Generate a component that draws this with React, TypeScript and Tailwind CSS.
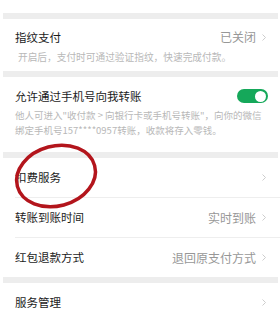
import React from "react";

const font = { fontFamily: '"Noto Sans CJK SC", "Noto Sans", sans-serif' };

const Band = () => <div className="ml-[3px] mr-[2px] h-[6px] bg-[#ededed]" />;

const Chevron = () => (
	<svg width="6" height="9" viewBox="0 0 6 9" className="ml-[5px] shrink-0">
		<path d="M1.5 1.5l3 3-3 3" fill="none" stroke="#cdcdcd" strokeWidth="1" />
	</svg>
);

const Row = ({ title, value, divider = true }: { title: string; value?: string; divider?: boolean }) => (
	<div className="relative">
		<div className="flex h-[39px] items-center pl-[15px] pr-[13px]">
			<span className="flex-1 text-[11.5px] text-[#1c1c1c]">{title}</span>
			{value && <span className="text-[12px] text-[#979797]">{value}</span>}
			<Chevron />
		</div>
		{divider && <div className="ml-[15px] h-px bg-[#eeeeee]" />}
	</div>
);

export default function App() {
	return (
		<div className="relative h-[320px] w-[280px] overflow-hidden bg-white" style={font}>
			<div className="h-[13px]" />
			<Band />

			<div className="h-[52px] pl-[15px] pr-[13px] pt-[10px]">
				<div className="flex items-center leading-[16px]">
					<span className="flex-1 text-[11.5px] text-[#1c1c1c]">指纹支付</span>
					<span className="text-[12px] text-[#979797]">已关闭</span>
					<Chevron />
				</div>
				<div className="mt-[5px] pl-[3px] text-[9.7px] leading-[14px] text-[#b8b8b8]">
					开启后，支付时可通过验证指纹，快速完成付款。
				</div>
			</div>
			<Band />

			<div className="h-[75px] pl-[15px] pr-[12px] pt-[11px]">
				<div className="flex items-center leading-[16px]">
					<span className="flex-1 text-[11.5px] text-[#1c1c1c]">允许通过手机号向我转账</span>
					<div className="flex h-[14px] w-[31px] items-center justify-end rounded-full bg-[#15a85a] pr-[2px]">
						<div className="h-[11px] w-[11px] rounded-full bg-white" />
					</div>
				</div>
				<div className="mt-[4px] whitespace-nowrap text-[9.5px] leading-[15px] text-[#b8b8b8]">
					<div>他人可进入"收付款 &gt; 向银行卡或手机号转账"，向你的微信</div>
					<div>绑定手机号157****0957转账，收款将存入零钱。</div>
				</div>
			</div>
			<Band />

			<Row title="扣费服务" />
			<Row title="转账到账时间" value="实时到账" />
			<Row title="红包退款方式" value="退回原支付方式" divider={false} />
			<Band />
			<Row title="服务管理" />

			<svg
				className="pointer-events-none absolute left-0 top-0"
				width="280"
				height="320"
				viewBox="0 0 280 320"
			>
				<ellipse
					cx="56"
					cy="176"
					rx="40"
					ry="30"
					transform="rotate(-15 56 176)"
					fill="none"
					stroke="#b3151c"
					strokeWidth="3.5"
				/>
			</svg>
		</div>
	);
}
